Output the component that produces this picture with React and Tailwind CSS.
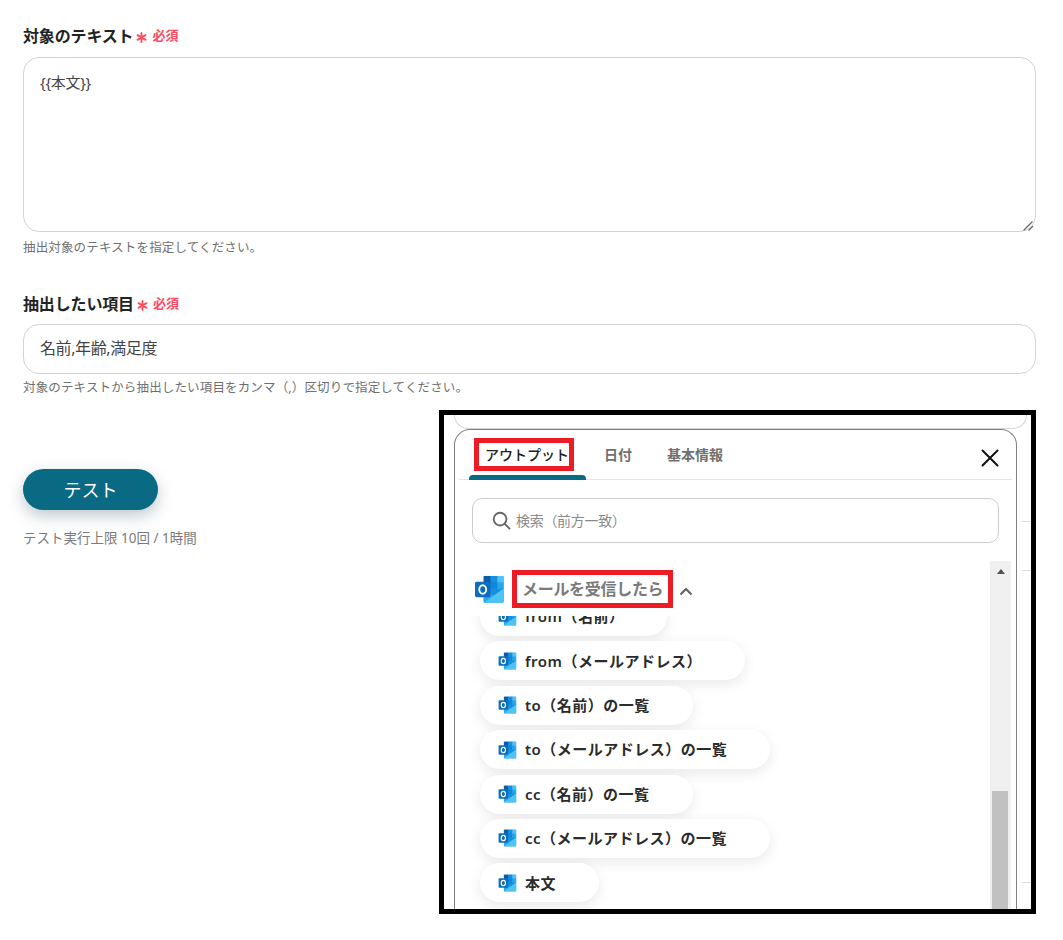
const font = { fontFamily: '"Noto Sans", "Noto Sans CJK JP", sans-serif' };

const OutlookIcon = ({ className }) => (
  <svg viewBox="0 0 32 30" className={className}>
    <path d="M10 2.5a1.5 1.5 0 0 1 1.5-1.5H29a1.5 1.5 0 0 1 1.5 1.5V14H10z" fill="#0a74d4" />
    <rect x="10" y="1" width="7" height="7" fill="#0a5cab" />
    <rect x="17" y="1" width="7" height="7" fill="#1490df" />
    <rect x="24" y="1" width="6.5" height="7" fill="#4fc3f7" />
    <rect x="10" y="8" width="7" height="7" fill="#0f78d4" />
    <rect x="17" y="8" width="7" height="7" fill="#0a8ad8" />
    <rect x="24" y="8" width="6.5" height="7" fill="#28a8ea" />
    <path d="M10 14h20.5v13.5a1.5 1.5 0 0 1-1.5 1.5H11.5a1.5 1.5 0 0 1-1.5-1.5z" fill="#1490df" />
    <path d="M10 14l10.2 7.4L30.5 14v13.5a1.5 1.5 0 0 1-1.5 1.5H11.5a1.5 1.5 0 0 1-1.5-1.5z" fill="#28a8ea" />
    <path d="M10 29l20.5-15v13.5a1.5 1.5 0 0 1-1.5 1.5z" fill="#50c3f5" />
    <rect x="1" y="7" width="16" height="16" rx="1.5" fill="#0f6cbd" />
    <ellipse cx="9" cy="15" rx="3.6" ry="4.4" fill="none" stroke="#fff" strokeWidth="1.9" />
  </svg>
);

const Required = () => (
  <span className="flex items-center text-[#ff4b5f]">
    <svg viewBox="0 0 12 12" className="w-[11px] h-[11px] ml-[3px] mt-[3px]" stroke="#ff4b5f" strokeWidth="2" strokeLinecap="round">
      <path d="M6 1v10M1.6 3.4l8.8 5.2M10.4 3.4L1.6 8.6" />
    </svg>
    <span className="ml-[5px] text-[13px] font-bold">必須</span>
  </span>
);

const FieldLabel = ({ children }) => (
  <div className="flex items-center h-5">
    <span className="text-base font-bold text-[#222] tracking-[-0.15px]">{children}</span>
    <Required />
  </div>
);

const Help = ({ children }) => (
  <p className="text-[12.5px] tracking-[0.15px] leading-4 text-[#6f6f6f]">{children}</p>
);

const chips = [
  'from（名前）',
  'from（メールアドレス）',
  'to（名前）の一覧',
  'to（メールアドレス）の一覧',
  'cc（名前）の一覧',
  'cc（メールアドレス）の一覧',
  '本文',
];

const Chip = ({ label }) => (
  <div className="flex items-center self-start h-[39px] pl-[18px] pr-[43px] rounded-full bg-white shadow-[0_4px_14px_rgba(0,0,0,0.09)]">
    <OutlookIcon className="w-[19px] h-[18px] shrink-0" />
    <span className="ml-2 text-[15px] font-semibold tracking-[0.5px] text-[#2b2b2b] whitespace-nowrap">{label}</span>
  </div>
);

const VariablePanel = () => (
  <div className="absolute left-[439px] top-[410px] w-[597px] h-[504px] border-[5px] border-black bg-white overflow-hidden">
    {/* lines of the page behind the panel */}
    <div className="absolute left-[578px] right-0 top-[106px] h-px bg-[#dddddd]" />
    <div className="absolute left-[578px] right-0 top-[155px] h-px bg-[#dddddd]" />
    <div className="absolute left-[578px] right-0 top-[467px] h-px bg-[#dddddd]" />

    <div className="ml-[10px] mr-[4px] h-[14px] border border-t-0 border-[#d5d5d5] rounded-b-2xl" />

    <div className="relative ml-[10px] w-[563px] h-[490px] border border-b-0 border-[#808080] rounded-t-2xl bg-white flex flex-col">
      <div className="relative mx-[4px] h-[50px] border-b border-[#e5e5e5] flex items-center shrink-0">
        <div className="flex items-center ml-[15px] mt-[-1px]">
          <span className="border-[5px] border-[#ed1c24] pl-[6px] pt-[2px] h-[33px] flex items-center text-sm font-medium text-[#222] whitespace-nowrap">アウトプット</span>
          <span className="ml-[30px] pt-[2px] text-sm font-bold text-[#707070]">日付</span>
          <span className="ml-[35px] pt-[2px] text-sm font-bold text-[#707070]">基本情報</span>
        </div>
        <div className="absolute left-[10px] bottom-[-1px] w-[117px] h-[5px] rounded-t-[4px] bg-[#0a6a84]" />
        <svg viewBox="0 0 18 18" className="absolute right-[13px] top-[19px] w-[18px] h-[18px]" stroke="#111" strokeWidth="2" strokeLinecap="round">
          <path d="M1.5 1.5l15 15M16.5 1.5l-15 15" />
        </svg>
      </div>

      <div className="mt-[18px] ml-[17px] w-[527px] h-[45px] border border-[#cccccc] rounded-[10px] flex items-center pl-[19px] shrink-0">
        <svg viewBox="0 0 20 20" className="w-[19px] h-[19px]" fill="none" stroke="#666" strokeWidth="2" strokeLinecap="round">
          <circle cx="8.5" cy="8.5" r="6.7" />
          <path d="M13.5 13.5l5 5" />
        </svg>
        <span className="ml-[5px] text-sm text-[#8a8a8a] tracking-[-0.3px]">検索（前方一致）</span>
      </div>

      <div className="relative flex-1 mt-[18px] min-h-0">
        <div className="absolute right-[5px] top-0 bottom-0 w-[21px] bg-[#f0f0f0] flex flex-col items-center">
          <div className="mt-[8px] w-0 h-0 border-x-[4px] border-x-transparent border-b-[5px] border-b-[#505050]" />
          <div className="absolute left-[2px] right-[3px] top-[230px] bottom-0 bg-[#c1c1c1]" />
        </div>

        <div className="relative mt-[9px] z-10 bg-white w-[500px] pb-2">
          <div className="flex items-center h-[38px]">
            <OutlookIcon className="ml-[19px] w-[31px] h-[29px] shrink-0" />
            <span className="ml-[7px] border-[5px] border-[#ed1c24] px-[5px] h-[38px] flex items-center text-base font-bold tracking-[-0.3px] text-[#7a7a7a] whitespace-nowrap">メールを受信したら</span>
            <svg viewBox="0 0 14 9" className="ml-[6px] mt-[5px] w-[14px] h-[9px]" fill="none" stroke="#666" strokeWidth="2.2">
              <path d="M1.5 7.5L7 2l5.5 5.5" />
            </svg>
          </div>
        </div>

        <div className="h-[356px] overflow-hidden -mt-[55px] pl-[25px] w-[530px]">
          <div className="flex flex-col gap-[5.4px] pt-[36px] pb-5">
            {chips.map((c) => (
              <Chip key={c} label={c} />
            ))}
          </div>
        </div>
      </div>
    </div>
  </div>
);

export default function App() {
  return (
    <div className="relative h-[940px] bg-white" style={font}>
      <div className="w-[1036px] pl-[23px] pt-[26px]">
        <FieldLabel>対象のテキスト</FieldLabel>
        <div className="relative mt-[11px]">
          <textarea
            readOnly
            defaultValue="{{本文}}"
            className="block w-full h-[175px] resize-none border border-[#d0d3da] rounded-2xl px-4 py-3 text-[15px] tracking-[-0.3px] leading-6 text-[#444] outline-none"
          />
          <svg viewBox="0 0 11 10" className="absolute right-[2px] bottom-[1px] w-[11px] h-[10px]" stroke="#666" strokeWidth="1.2">
            <path d="M0.5 9.5L9.5 0.5M5.5 9.5L10 5" />
          </svg>
        </div>
        <div className="mt-2">
          <Help>抽出対象のテキストを指定してください。</Help>
        </div>

        <div className="mt-[38px]">
          <FieldLabel>抽出したい項目</FieldLabel>
        </div>
        <input
          readOnly
          value="名前,年齢,満足度"
          className="mt-[10px] block w-full h-[50px] border border-[#d0d3da] rounded-2xl px-4 pb-1 text-base tracking-[-0.4px] text-[#444] outline-none"
        />
        <div className="mt-[6px]">
          <Help>対象のテキストから抽出したい項目をカンマ（,）区切りで指定してください。</Help>
        </div>

        <button className="mt-[73px] block w-[135px] h-[41px] rounded-full bg-[#0a6a84] text-white text-lg shadow-[0_6px_16px_rgba(0,40,60,0.25)]">
          テスト
        </button>
        <p className="mt-[18px] text-[13.5px] leading-5 text-[#7a7a7a]">テスト実行上限 10回 / 1時間</p>
      </div>

      <VariablePanel />
    </div>
  );
}
